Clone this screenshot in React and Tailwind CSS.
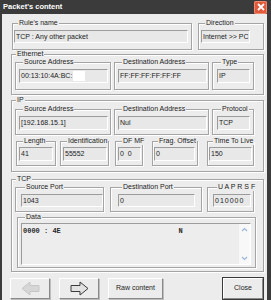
import React from "react";

function Group({ label, className = "", children }) {
  return (
    <fieldset
      className={`min-w-0 border border-[#a4a4a4] shadow-[inset_1px_1px_0_#fff,1px_1px_0_#fff] ${className}`}
    >
      <legend className="ml-[4px] whitespace-nowrap bg-[#ececec] px-[1px] text-[7px] leading-[8px] text-[#1c1c1c]">
        {label}
      </legend>
      {children}
    </fieldset>
  );
}

function Field({ className = "", children }) {
  return (
    <div
      className={`overflow-hidden whitespace-nowrap border border-t-[#9c9c9c] border-l-[#9c9c9c] border-b-white border-r-white bg-[#e8e8e8] px-[1px] text-[7px] text-[#1c1c1c] ${className}`}
    >
      {children}
    </div>
  );
}

function Arrow({ disabled }) {
  return (
    <svg width="19" height="15" viewBox="0 0 19 15">
      <path
        d={disabled ? "M18 4.5 H9 V1 L1 7.5 L9 14 V10.5 H18 Z" : "M1 4.5 H10 V1 L18 7.5 L10 14 V10.5 H1 Z"}
        fill={disabled ? "#d6d6d6" : "#e2e2e2"}
        stroke={disabled ? "#c6c6c6" : "#3a3a3a"}
        strokeWidth="1"
      />
    </svg>
  );
}

function Button({ className = "", children }) {
  return (
    <div
      className={`flex h-[21px] items-center justify-center border border-t-white border-l-white border-b-[#8a8a8a] border-r-[#8a8a8a] bg-[#ececec] text-[7px] text-[#1c1c1c] shadow-[1px_1px_0_#bdbdbd] ${className}`}
    >
      {children}
    </div>
  );
}

export default function App() {
  return (
    <div className="flex h-[300px] w-[271px] flex-col overflow-hidden bg-[#3b3b3b] font-['Liberation_Sans',Arial,sans-serif]">
      {/* title bar */}
      <div className="flex h-[14px] items-center pl-[3px] pr-[4px]">
        <span className="text-[7.5px] font-bold leading-[14px] text-white">Packet's content</span>
        <div className="ml-auto flex h-[13px] w-[13px] items-center justify-center rounded-[2px] bg-[#e2583a] shadow-[inset_0_0_0_1px_#f08a6c]">
          <svg width="8" height="8" viewBox="0 0 8 8">
            <path d="M1 1 L7 7 M7 1 L1 7" stroke="#fff" strokeWidth="1.8" />
          </svg>
        </div>
      </div>

      {/* body */}
      <div className="ml-[2px] mr-[4px] flex flex-1 flex-col bg-[#ececec]">
        {/* rule + direction */}
        <div className="mt-[5px] flex">
          <Group label="Rule's name" className="ml-[10px] h-[31px] w-[180px] pt-[3px] pl-[1px]">
            <Field className="h-[13px] w-[174px] leading-[11px]">TCP : Any other packet</Field>
          </Group>
          <Group label="Direction" className="ml-[6px] h-[31px] w-[66px] pt-[3px] pl-[2px]">
            <Field className="h-[13px] w-[49px] leading-[11px]">Internet &gt;&gt; PC</Field>
          </Group>
        </div>

        {/* ethernet */}
        <Group label="Ethernet" className="ml-[9px] h-[45px] w-[253px]">
          <div className="flex">
            <Group label="Source Address" className="ml-[3px] h-[32px] w-[96px] pt-[3px] pl-[3px]">
              <Field className="h-[14px] w-[89px] leading-[12px]">
                00:13:10:4A:BC:<span className="ml-[1px] inline-block h-[10px] w-[12px] bg-white align-middle" />
              </Field>
            </Group>
            <Group label="Destination Address" className="ml-[3px] h-[32px] w-[95px] pt-[3px] pl-[3px]">
              <Field className="h-[14px] w-[89px] leading-[12px]">FF:FF:FF:FF:FF:FF</Field>
            </Group>
            <Group label="Type" className="ml-[3px] h-[32px] w-[42px] pt-[3px] pl-[4px]">
              <Field className="h-[14px] w-[33px] leading-[12px]">IP</Field>
            </Group>
          </div>
        </Group>

        {/* ip */}
        <Group label="IP" className="ml-[9px] mt-[1px] h-[76px] w-[253px] pt-[1px]">
          <div className="flex">
            <Group label="Source Address" className="ml-[3px] h-[30px] w-[96px] pt-[3px] pl-[3px]">
              <Field className="h-[14px] w-[89px] leading-[12px]">[192.168.15.1]</Field>
            </Group>
            <Group label="Destination Address" className="ml-[3px] h-[30px] w-[95px] pt-[3px] pl-[3px]">
              <Field className="h-[14px] w-[89px] leading-[12px]">Nul</Field>
            </Group>
            <Group label="Protocol" className="ml-[3px] h-[30px] w-[42px] pt-[3px] pl-[4px]">
              <Field className="h-[14px] w-[33px] leading-[12px]">TCP</Field>
            </Group>
          </div>
          <div className="mt-[2px] flex">
            <Group label="Length" className="ml-[4px] h-[29px] w-[40px] pt-[2px] pl-[2px]">
              <Field className="h-[14px] w-[34px] leading-[12px]">41</Field>
            </Group>
            <Group label="Identification" className="ml-[4px] h-[29px] w-[49px] pt-[2px] pl-[2px]">
              <Field className="h-[14px] w-[44px] leading-[12px]">55552</Field>
            </Group>
            <Group label="DF MF" className="ml-[6px] h-[29px] w-[28px] pt-[2px] pl-[2px]">
              <Field className="h-[14px] w-[23px] leading-[12px]">0&nbsp;&nbsp;0</Field>
            </Group>
            <Group label="Frag. Offset" className="ml-[9px] h-[29px] w-[46px] pt-[2px] pl-[1px]">
              <Field className="h-[14px] w-[41px] leading-[12px]">0</Field>
            </Group>
            <Group label="Time To Live" className="ml-[9px] h-[29px] w-[47px] pt-[2px] pl-[1px]">
              <Field className="h-[14px] w-[43px] leading-[12px]">150</Field>
            </Group>
          </div>
        </Group>

        {/* tcp */}
        <Group label="TCP" className="ml-[9px] mt-[3px] h-[97px] w-[253px]">
          <div className="flex">
            <Group label="Source Port" className="ml-[3px] h-[29px] w-[89px] pt-[3px] pl-[5px]">
              <Field className="h-[13px] w-[82px] leading-[11px]">1043</Field>
            </Group>
            <Group label="Destination Port" className="ml-[6px] h-[29px] w-[92px] pt-[3px] pl-[7px]">
              <Field className="h-[13px] w-[77px] leading-[11px]">0</Field>
            </Group>
            <Group label="U A P R S F" className="ml-[5px] h-[29px] w-[47px] pt-[3px] pl-[5px]">
              <Field className="h-[13px] w-[38px] leading-[11px] tracking-[1px]">010000</Field>
            </Group>
          </div>
          <Group label="Data" className="ml-[5px] mt-[1px] h-[55px] w-[239px] pt-[2px] pl-[3px]">
            <div className="flex h-[42px] w-[230px] border border-t-[#9c9c9c] border-l-[#9c9c9c] border-b-white border-r-white bg-[#ededed]">
              <div className="flex-1 whitespace-pre pl-[1px] pt-[3px] font-['Liberation_Mono',monospace] text-[7px] font-bold leading-[8px] text-[#2a2a2a]">
                {"0000 : 4E                            N"}
              </div>
              <div className="flex w-[11px] flex-col justify-between bg-[#f8f8f8] py-[2px]">
                <svg width="11" height="7" viewBox="0 0 11 7">
                  <path d="M3 5 L5.5 2.5 L8 5" fill="none" stroke="#9cb8d8" strokeWidth="1.2" />
                </svg>
                <svg width="11" height="7" viewBox="0 0 11 7">
                  <path d="M3 2 L5.5 4.5 L8 2" fill="none" stroke="#9cb8d8" strokeWidth="1.2" />
                </svg>
              </div>
            </div>
          </Group>
        </Group>

        {/* buttons */}
        <div className="mt-[6px] flex">
          <Button className="ml-[8px] w-[40px]">
            <Arrow disabled />
          </Button>
          <Button className="ml-[9px] w-[40px]">
            <Arrow />
          </Button>
          <Button className="ml-[9px] w-[55px]">Raw content</Button>
          <Button className="ml-[60px] w-[40px] outline outline-1 outline-[#3a3a3a]">Close</Button>
        </div>
      </div>
    </div>
  );
}
